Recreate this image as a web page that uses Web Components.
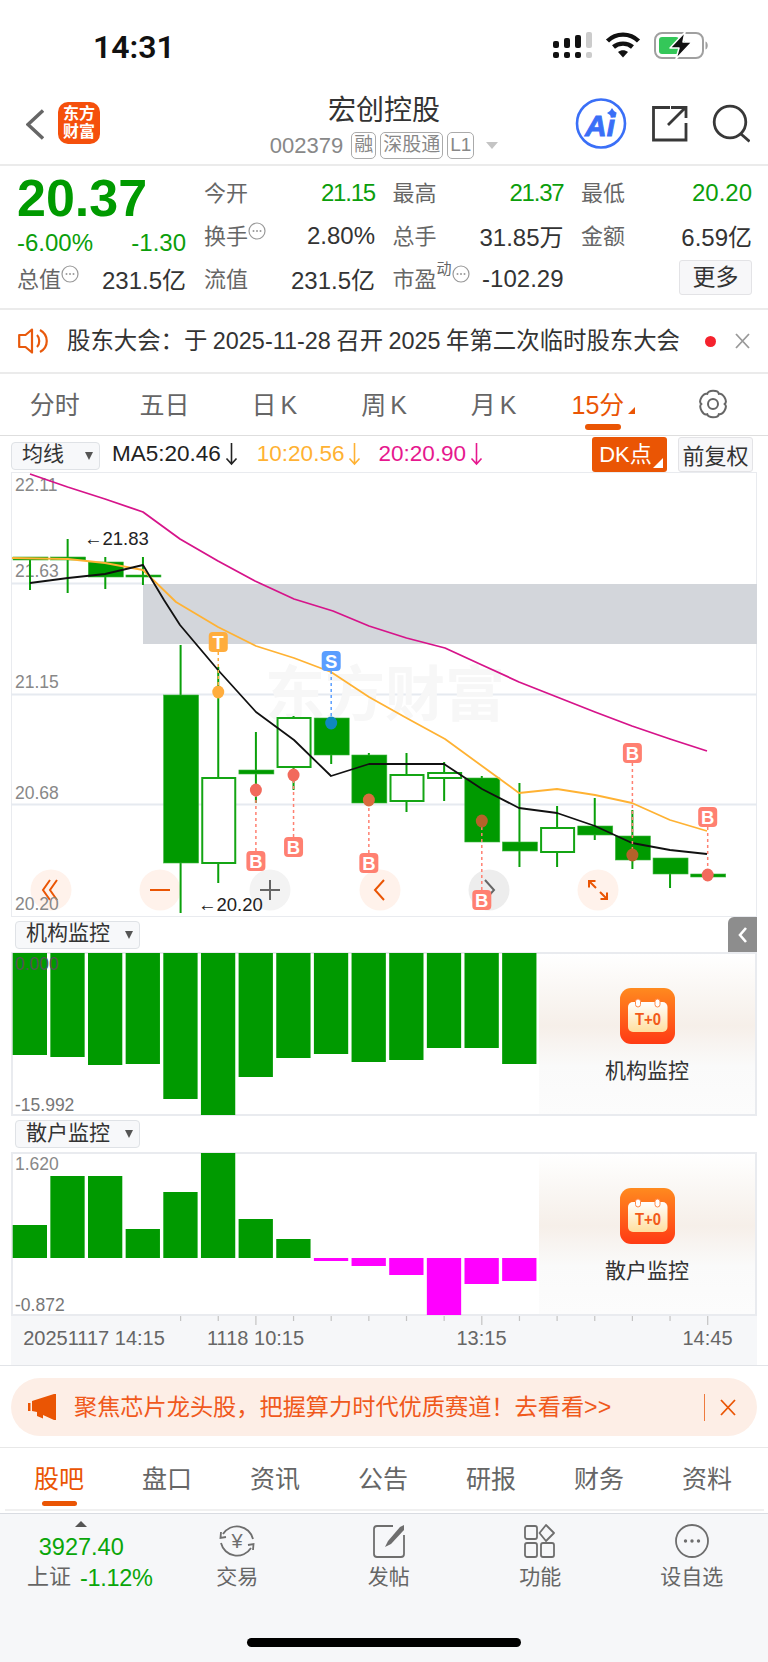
<!DOCTYPE html>
<html lang="zh">
<head>
<meta charset="utf-8">
<title>宏创控股</title>
<style>
html, body { margin: 0; padding: 0; background: #fff; }
body { width: 768px; height: 1662px; overflow: hidden; font-family: "Liberation Sans", "Noto Sans CJK SC", sans-serif; color: #333; }
</style>
</head>
<body>
<status-bar></status-bar>
<stock-nav></stock-nav>
<quote-panel></quote-panel>
<notice-bar></notice-bar>
<period-tabs></period-tabs>
<ma-bar></ma-bar>
<kline-chart></kline-chart>
<monitor-panel name="机构监控" head="35" max="0.000" min="-15.992"
  bars="1055,1057,1065,1064,1099,1115,1077,1058,1054,1062,1060,1048,1048,1064" base="953"></monitor-panel>
<monitor-panel name="散户监控" head="36" max="1.620" min="-0.872"
  bars="1225,1176,1176,1229,1192,1153,1219,1239,1261,1266,1275,1315,1284,1281" base="1258"></monitor-panel>
<time-axis></time-axis>
<promo-banner></promo-banner>
<info-tabs></info-tabs>
<bottom-bar></bottom-bar>

<script>
const GREEN = "#009a00"
const ORANGE = "#ea5504"
const slotX = i => 30 + 37.65 * i

class Shadowed extends HTMLElement {
    constructor() {
        super()
        this.attachShadow({ mode: "open" })
    }
    connectedCallback() {
        this.shadowRoot.innerHTML = `<style>${this.getStyles()}</style>${this.getMarkup()}`
    }
    getStyles() { return "" }
    getMarkup() { return "" }
}

class StatusBar extends Shadowed {
    getStyles() {
        return `
        :host { display: flex; height: 82px; box-sizing: border-box; padding: 27px 0 0 93px; }
        .time { font: 600 32px/34px Roboto, sans-serif; color: #111; width: 460px; padding-top: 3px; }
        svg { display: block; }
        `
    }
    getMarkup() {
        return `
        <div class="time">14:31</div>
        <svg width="162" height="34" viewBox="553 27 162 34">
          <g fill="#111">
            <rect x="553" y="41" width="6" height="7" rx="2"/><rect x="564" y="38" width="6" height="10" rx="2"/><rect x="575" y="35" width="6" height="13" rx="2"/>
            <rect x="553" y="52" width="6" height="6" rx="2"/><rect x="564" y="52" width="6" height="6" rx="2"/><rect x="575" y="52" width="6" height="6" rx="2"/>
          </g>
          <g fill="#ccc"><rect x="586" y="32" width="6" height="16" rx="2"/><rect x="586" y="52" width="6" height="6" rx="2"/></g>
          <g fill="none" stroke="#111" stroke-width="4.4">
            <path d="M607.5 41 C616 32.5 630 32.5 638.5 41"/>
            <path d="M613.5 47 C618.5 42.5 627.5 42.5 632.5 47"/>
          </g>
          <path d="M618 52 C621 49.5 625 49.5 628 52 L623 57.500 Z" fill="#111"/>
          <rect x="655" y="33" width="48" height="25" rx="7" fill="#fff" stroke="#a0a0a0" stroke-width="2"/>
          <path d="M705.500 41.500 C708.500 42.500 708.500 48.500 705.500 49.500 Z" fill="#a0a0a0"/>
          <rect x="659" y="37" width="20" height="17" rx="3" fill="#34c759"/>
          <rect x="683" y="41" width="2" height="9" fill="#34c759"/>
          <path d="M685 32 L670 48 H679 L676 59 L692 42 H683 Z" fill="#111" stroke="#fff" stroke-width="1.500" stroke-linejoin="round"/>
        </svg>
        `
    }
}

class StockNav extends Shadowed {
    getStyles() {
        return `
        :host { display: block; position: relative; height: 84px; box-sizing: border-box; border-bottom: 2px solid #ebebeb; }
        .row { display: flex; height: 82px; }
        .back { margin: 27px 14px 0 26px; }
        .logo { width: 42px; height: 42px; margin-top: 20px; border-radius: 10px; background: #f5500c; color: #fff; font-weight: 700; font-size: 16px; line-height: 18px; text-align: center; display: flex; flex-direction: column; justify-content: center; }
        .mid { flex: 1; display: flex; flex-direction: column; align-items: center; padding-left: 94px; }
        h1 { margin: 13px 0 0; font-size: 28px; line-height: 32px; font-weight: 400; color: #333; }
        .sub { display: flex; align-items: center; margin-top: 5px; height: 27px; color: #888; font-size: 22px; }
        .code { margin-right: 8px; }
        .tag { box-sizing: border-box; height: 27px; line-height: 24px; padding: 0 2px; margin-right: 4px; border: 1px solid #aaa; border-radius: 5px; font-size: 19px; }
        .tri { width: 0; height: 0; margin-left: 8px; border: 6px solid transparent; border-top: 7px solid #c4c4c4; border-bottom: 0; }
        .tools { display: block; margin-right: 18px; }
        `
    }
    getMarkup() {
        return `
        <div class="row">
          <svg class="back" width="18" height="32" viewBox="26 109 18 32"><path d="M43 110.500 L28 124.500 L43 138.500" fill="none" stroke="#666" stroke-width="3.400"/></svg>
          <div class="logo"><span>东方</span><span>财富</span></div>
          <div class="mid">
            <h1>宏创控股</h1>
            <div class="sub"><span class="code">002379</span><span class="tag">融</span><span class="tag">深股通</span><span class="tag">L1</span><span class="tri"></span></div>
          </div>
          <svg class="tools" width="176" height="82" viewBox="574 82 176 82">
            <circle cx="601" cy="123.500" r="24" fill="#fff" stroke="#3a6ff7" stroke-width="2.600"/>
            <text x="600" y="136" text-anchor="middle" font-family="Liberation Sans" font-weight="700" font-style="italic" font-size="30" fill="#3a6ff7" stroke="#3a6ff7" stroke-width=".9">Ai</text>
            <path d="M612 108 l2 3 3 2 -3 2 -2 3 -2 -3 -3 -2 3 -2 Z" fill="#3a6ff7"/>
            <g fill="none" stroke="#383838" stroke-width="2.800">
              <path d="M670 107.500 H653.500 V140 H686 V123"/>
              <path d="M668 125 L685 108 M671 107.500 H686 V118"/>
              <circle cx="730" cy="122" r="15.800"/>
              <path d="M741 134 L749.500 141.500"/>
            </g>
          </svg>
        </div>
        `
    }
}

class QuoteCell extends Shadowed {
    getStyles() {
        return `
        :host { display: flex; align-items: center; justify-content: space-between; height: 43px; font-size: 24px; color: #333; white-space: nowrap; }
        .label { display: flex; color: #666; font-size: 22px; margin-top: -4px; }
        .value { color: #333; }
        :host([green]) .value { color: #0b9e0b; }
        :host([tight]) .value { letter-spacing: -1.200px; }
        sup { font-size: 15px; line-height: 15px; margin: 0; display: block; height: 15px; }
        svg { display: block; margin: 3px 0 0 0; }
        `
    }
    getMarkup() {
        const info = this.hasAttribute("info") ? `<svg width="18" height="20" viewBox="0 0 18 20"><circle cx="9" cy="10" r="8" fill="none" stroke="#999" stroke-width="1.200"/><g fill="#999"><circle cx="5.500" cy="10" r="1"/><circle cx="9" cy="10" r="1"/><circle cx="12.500" cy="10" r="1"/></g></svg>` : ""
        const sup = this.hasAttribute("sup") ? `<sup>${this.getAttribute("sup")}</sup>` : ""
        return `<span class="label">${this.getAttribute("label")}${sup}${info}</span><span class="value">${this.getAttribute("value")}</span>`
    }
}

class QuotePanel extends Shadowed {
    getStyles() {
        return `
        :host { display: flex; height: 144px; box-sizing: border-box; border-bottom: 2px solid #ebebeb; padding: 6px 16px 0 17px; }
        .left { width: 170px; margin-right: 18px; }
        .price { font-size: 52px; line-height: 52px; font-weight: 700; color: ${GREEN}; height: 50px; }
        .chg { display: flex; justify-content: space-between; margin-top: 6px; height: 29px; line-height: 29px; font-size: 24px; color: #0b9e0b; }
        .grid { flex: 1; display: grid; grid-template-columns: repeat(3, 171px); column-gap: 17.500px; grid-auto-rows: 43px; margin-top: -1px; }
        .more { box-sizing: border-box; justify-self: end; width: 73px; height: 35px; margin-top: 3px; border: 1px solid #e3e3e6; border-radius: 3px; background: #f7f7f9; font-size: 23px; line-height: 32px; text-align: center; color: #333; }
        `
    }
    getMarkup() {
        return `
        <div class="left">
          <div class="price">20.37</div>
          <div class="chg"><span>-6.00%</span><span>-1.30</span></div>
          <quote-cell label="总值" info value="231.5亿"></quote-cell>
        </div>
        <div class="grid">
          <quote-cell label="今开" value="21.15" green tight></quote-cell>
          <quote-cell label="最高" value="21.37" green tight></quote-cell>
          <quote-cell label="最低" value="20.20" green></quote-cell>
          <quote-cell label="换手" info value="2.80%"></quote-cell>
          <quote-cell label="总手" value="31.85万"></quote-cell>
          <quote-cell label="金额" value="6.59亿"></quote-cell>
          <quote-cell label="流值" value="231.5亿"></quote-cell>
          <quote-cell label="市盈" sup="动" info value="-102.29"></quote-cell>
          <div class="more">更多</div>
        </div>
        `
    }
}

class NoticeBar extends Shadowed {
    getStyles() {
        return `
        :host { display: flex; align-items: center; height: 64px; box-sizing: border-box; border-bottom: 2px solid #ebebeb; padding: 0 18px; }
        svg { display: block; flex: none; }
        .text { flex: 1; margin: -5px 0 0 19px; font-size: 23.400px; word-spacing: -1px; color: #333; white-space: nowrap; }
        .dot { width: 11px; height: 11px; border-radius: 50%; background: #f5222d; margin-right: 19px; }
        `
    }
    getMarkup() {
        return `
        <svg width="30" height="26" viewBox="18 327 30 26" fill="none" stroke="#e8590c" stroke-width="2.200">
          <path d="M32 328.500 L25.500 334 H19.200 V346 H25.500 L32 351.500 Z" stroke-linejoin="round"/>
          <path d="M37 334 C40 337 40 343 37 346"/>
          <path d="M40 329 C49 334 49 346 40 351"/>
        </svg>
        <div class="text">股东大会：于 2025-11-28 召开 2025 年第二次临时股东大会</div>
        <span class="dot"></span>
        <svg width="15" height="16" viewBox="0 0 15 16"><path d="M1 1 L14 15 M14 1 L1 15" stroke="#999" stroke-width="1.800"/></svg>
        `
    }
}

class PeriodTabs extends Shadowed {
    getStyles() {
        return `
        :host { display: grid; grid-template-columns: repeat(7, 1fr); height: 62px; box-sizing: border-box; border-bottom: 1px solid #dedede; }
        div { position: relative; display: flex; align-items: center; justify-content: center; padding-bottom: 4px; font-size: 25px; color: #666; white-space: nowrap; }
        .k { margin-left: 4px; }
        .on { color: ${ORANGE}; }
        .on::after { content: ""; position: absolute; left: 36px; bottom: 5px; width: 36px; height: 6px; border-radius: 3px; background: ${ORANGE}; }
        .on b { display: block; width: 0; height: 0; margin: 16px 0 0 4px; border-left: 7px solid transparent; border-bottom: 7px solid ${ORANGE}; }
        svg { margin-top: 3px; }
        `
    }
    gearPath() {
        // six rounded lobes, one pointing straight up
        const pt = (r, deg) => {
            const a = deg * Math.PI / 180
            return `${(15 + r * Math.cos(a)).toFixed(1)} ${(15 + r * Math.sin(a)).toFixed(1)}`
        }
        let d = `M${pt(11.5, -120)}`
        for (let k = 0; k < 6; k++) {
            const mid = -90 + 60 * k
            d += ` C${pt(15.5, mid - 22)} ${pt(15.5, mid + 22)} ${pt(11.5, mid + 30)}`
        }
        return d + " Z"
    }
    getMarkup() {
        return `
        <div>分时</div><div>五日</div><div><span>日<span class="k">K</span></span></div><div><span>周<span class="k">K</span></span></div><div><span>月<span class="k">K</span></span></div>
        <div class="on">15分<b></b></div>
        <div><svg width="30" height="30" viewBox="0 0 30 30" fill="none" stroke="#666" stroke-width="2"><path d="${this.gearPath()}" stroke-linejoin="round"/><circle cx="15" cy="15" r="5"/></svg></div>
        `
    }
}

class ChartSelect extends Shadowed {
    getStyles() {
        return `
        :host { display: inline-flex; box-sizing: border-box; align-items: center; justify-content: space-between; height: 28px; padding: 0 6px 0 10px; background: #f7f8fa; border: 1px solid #dfe2e6; border-radius: 4px; font-size: 21px; line-height: 22px; color: #333; white-space: nowrap; }
        span { display: block; margin-top: -3px; }
        i { width: 0; height: 0; border: 4.500px solid transparent; border-top: 8px solid #555; border-bottom: 0; }
        `
    }
    getMarkup() {
        return `<span><slot></slot></span><i></i>`
    }
}

class MaBar extends Shadowed {
    getStyles() {
        return `
        :host { display: flex; align-items: center; height: 36px; box-sizing: border-box; padding: 0 15px 0 11px; font-size: 22.500px; white-space: nowrap; }
        chart-select { width: 89px; margin-top: 3px; margin-right: 12px; }
        span { display: flex; align-items: center; }
        svg { margin-left: 4px; }
        .a { color: #222; margin-right: 19px; }
        .b { color: #ffb233; margin-right: 17px; }
        .c { color: #e6188e; margin-right: auto; }
        .dk { position: relative; box-sizing: border-box; width: 75px; height: 35px; border-radius: 3px; background: ${ORANGE}; color: #fff; line-height: 35px; text-align: center; justify-content: center; font-size: 22px; padding-right: 8px; }
        .dk::after { content: ""; position: absolute; right: 4px; bottom: 4px; border-left: 10px solid transparent; border-bottom: 10px solid #fff; }
        .fq { box-sizing: border-box; width: 75px; height: 35px; margin-left: 11px; border: 1px solid #e3e3e6; border-radius: 3px; background: #f7f7f9; color: #333; justify-content: center; font-size: 22px; }
        `
    }
    arrow(color) {
        return `<svg width="13" height="24" viewBox="0 0 13 24" fill="none" stroke="${color}" stroke-width="1.600"><path d="M6.500 1 V22 M1.500 16.500 L6.500 22 L11.500 16.500"/></svg>`
    }
    getMarkup() {
        return `
        <chart-select>均线</chart-select>
        <span class="a">MA5:20.46${this.arrow("#222")}</span>
        <span class="b">10:20.56${this.arrow("#ffb233")}</span>
        <span class="c">20:20.90${this.arrow("#e6188e")}</span>
        <span class="dk">DK点</span>
        <span class="fq">前复权</span>
        `
    }
}

class KlineChart extends Shadowed {
    getStyles() {
        return `
        :host { display: block; height: 445px; }
        svg { display: block; font-family: "Liberation Sans", "Noto Sans CJK SC", sans-serif; }
        `
    }
    candles() {
        // top, bottom, wick top, wick bottom, filled
        const data = [
            [557, 560, 557, 590, 1], [557, 560, 539, 593, 1], [562, 577, 557, 589, 1], [575, 577, 557, 585, 1],
            [695, 863, 645, 913, 1], [778, 863, 667, 883, 0], [770, 774, 732, 803, 1], [718, 767, 716, 790, 0],
            [718, 755, 718, 764, 1], [755, 803, 753, 803, 1], [775, 801, 753, 812, 0], [773, 778, 762, 801, 0],
            [778, 842, 776, 842, 1], [842, 851, 783, 867, 1], [828, 852, 806, 867, 0], [826, 835, 798, 840, 1],
            [836, 860, 810, 869, 1], [858, 874, 858, 888, 1], [874, 877, 874, 877, 1]
        ]
        return data.map((d, i) => {
            const x = slotX(i)
            const body = d[4]
                ? `<rect x="${x - 17}" y="${d[0]}" width="35" height="${d[1] - d[0]}" fill="${GREEN}" stroke="#3cb43c" stroke-width=".6"/>`
                : `<rect x="${x - 16}" y="${d[0]}" width="33" height="${d[1] - d[0]}" fill="#fff" stroke="#14a514" stroke-width="2"/>`
            return `<path d="M${x} ${d[2]} V${d[0]} M${x} ${d[1]} V${d[3]}" stroke="#0aa00a" stroke-width="2"/>${body}`
        }).join("")
    }
    lines() {
        const pink = "30,474 67.600,487 105,499 143,512 180,539 218,561 255,581 294,599 333,611 369,626 406.500,638 445,648 482,665 519,682 557,697 595,712 632,726 670,739 707,751"
        const yellow = "12,558 68,559 105,563 143,570 176,602 218,627 256,646 294,658 331,672 369,697 406.500,718 445,739 482,766 519,793 557,789 595,795 632,803 670,820 707,831"
        const black = "30,583 68,578 105,574 143,565 164,600 180,625 218,670 256,712 294,740 331,776 369,764 406,764 444,764 482,789 519,808 557,813 595,826 632,843 670,850 707,854"
        return `<g fill="none" stroke-width="1.800" stroke-linejoin="round">
          <polyline points="${pink}" stroke="#d6148a"/>
          <polyline points="${yellow}" stroke="#ffb233"/>
          <polyline points="${black}" stroke="#111"/>
        </g>`
    }
    marker(letter, i, boxTop, dotY, fill, dotFill) {
        const x = slotX(i)
        const boxBottom = boxTop + 20
        const from = boxTop > dotY ? boxTop : boxBottom
        return `<path d="M${x} ${from} L${x} ${dotY}" stroke="${fill}" stroke-width="1.500" stroke-dasharray="3 3"/>
          <ellipse cx="${x}" cy="${dotY}" rx="6" ry="6.500" fill="${dotFill}"/>
          <rect x="${x - 9.500}" y="${boxTop}" width="19" height="20" rx="4" fill="${fill}"/>
          <text x="${x}" y="${boxTop + 16.500}" text-anchor="middle" font-size="18.500" font-weight="700" fill="#fff">${letter}</text>`
    }
    zoomButtons() {
        const icons = [
            [51, "#fff2eb", `<path d="M-1 -10 L-8 0 L-1 10 M6 -10 L-1 0 L6 10" stroke="${ORANGE}"/>`],
            [160, "#fff2eb", `<path d="M-10 0 H10" stroke="${ORANGE}"/>`],
            [270, "#f3f3f3", `<path d="M-10 0 H10 M0 -10 V10" stroke="#666"/>`],
            [380, "#fff2eb", `<path d="M4 -10 L-5 0 L4 10" stroke="${ORANGE}"/>`],
            [489, "#ededed", `<path d="M-4 -10 L5 0 L-4 10" stroke="#666"/>`],
            [598, "#fff2eb", `<path d="M-9 -9 L-2 -2 M-9 -2.500 V-9 H-2.500 M9 9 L2 2 M9 2.500 V9 H2.500" stroke="${ORANGE}"/>`]
        ]
        return icons.map(b => `<g transform="translate(${b[0]} 890)" fill="none" stroke-width="2"><circle r="20.500" fill="${b[1]}"/>${b[2]}</g>`).join("")
    }
    getMarkup() {
        const grey = "#888"
        const labels = [["22.11", 491], ["21.63", 577], ["21.15", 688], ["20.68", 799], ["20.20", 910]]
        const B = "#ff8071"
        const brown = "#b5622a"
        return `
        <svg width="768" height="445" viewBox="0 472 768 445">
          <rect x="11.500" y="472.500" width="745" height="444" fill="#fff" stroke="#e9ebef"/>
          <rect x="143" y="584" width="614" height="60" fill="#d3d6db"/>
          <path d="M11 583.500 H143 M11 694.500 H757 M11 804.500 H757" stroke="#e6eaf0" stroke-width="2"/>
          <text x="385" y="716" text-anchor="middle" font-size="60" font-weight="700" fill="#f7f7f7">东方财富</text>
          ${this.zoomButtons()}
          ${labels.map(l => `<text x="15" y="${l[1]}" font-size="17.500" fill="${grey}">${l[0]}</text>`).join("")}
          ${this.candles()}
          ${this.lines()}
          ${this.marker("T", 5, 632, 692, "#ffad3d", "#ffad3d")}
          ${this.marker("S", 8, 651, 723, "#5a9eff", "#0f88c0")}
          ${this.marker("B", 6, 851, 790, B, "#f26a5c")}
          ${this.marker("B", 7, 837, 775, B, "#f26a5c")}
          ${this.marker("B", 9, 853, 800, B, "#d96b3e")}
          ${this.marker("B", 12, 890, 821, B, brown)}
          ${this.marker("B", 16, 743, 855, B, brown)}
          ${this.marker("B", 18, 807, 875, B, "#f26a5c")}
          <text x="84" y="545" font-size="18.500" fill="#222">←21.83</text>
          <text x="198" y="911" font-size="18.500" fill="#222">←20.20</text>
        </svg>
        `
    }
}

class MonitorPanel extends Shadowed {
    getStyles() {
        return `
        :host { display: block; }
        .head { position: relative; display: flex; align-items: center; padding-left: 15px; height: var(--head); }
        chart-select { width: 125px; }
        .pull { position: absolute; right: 11px; top: 0; width: 29px; height: 35px; background: #8d8d8d; border-radius: 6px 0 0 0; display: flex; align-items: center; justify-content: center; }
        .body { display: flex; height: 164px; margin: 0 11px; box-sizing: border-box; }
        svg.bars { display: block; flex: none; font-family: "Liberation Sans", sans-serif; }
        .promo { flex: 1; display: flex; flex-direction: column; align-items: center; padding-top: 34px; font-size: 21px; color: #333;
          background: linear-gradient(180deg, #fff 0%, #faf7f4 22%, #f6efe9 45%, #fafafa 70%, #fcfcfc 100%);
          border: solid #e9ebef; border-width: 2px 2px 2px 0; box-sizing: border-box; }
        .name { margin-top: 10px; }
        `
    }
    getMarkup() {
        const uid = this.getAttribute("name")
        const base = Number(this.getAttribute("base"))
        const bars = this.getAttribute("bars").split(",").map(Number)
        const top = Number(this.getAttribute("head")) === 35 ? 952 : 1152
        const rects = bars.map((b, i) => {
            const y = Math.min(b, base)
            const h = Math.abs(b - base)
            const fill = b > base && top === 1152 ? "#ff00ff" : GREEN
            return `<rect x="${12.700 + 37.650 * i}" y="${y}" width="34.300" height="${h}" fill="${fill}"/>`
        }).join("")
        const pull = top === 952 ? `<div class="pull"><svg width="12" height="18" viewBox="0 0 12 18"><path d="M9 2 L3 9 L9 16" fill="none" stroke="#fff" stroke-width="2.600"/></svg></div>` : ""
        const dark = top === 952 ? "#555" : "#888"
        this.style.setProperty("--head", this.getAttribute("head") + "px")
        return `
        <div class="head"><chart-select>${uid}</chart-select>${pull}</div>
        <div class="body">
          <svg class="bars" width="528" height="164" viewBox="11 ${top} 528 164">
            <path d="M12 ${top + 1} H539 M12 ${top + 163} H539 M12 ${top} V${top + 164}" stroke="#e9ebef" stroke-width="2" fill="none"/>
            ${rects}
            <text x="15" y="${top + 18}" font-size="17.500" fill="${dark}">${this.getAttribute("max")}</text>
            <text x="15" y="${top + 159}" font-size="17.500" fill="#777">${this.getAttribute("min")}</text>
          </svg>
          <div class="promo">
            <svg width="55" height="56" viewBox="0 0 55 56">
              <defs>
                <linearGradient id="g" x1="0" y1="0" x2="0" y2="1"><stop offset="0" stop-color="#ff8a1f"/><stop offset="1" stop-color="#ff3a14"/></linearGradient>
                <linearGradient id="c" x1="0" y1="0" x2="0" y2="1"><stop offset="0" stop-color="#fff"/><stop offset="1" stop-color="#ffdf9f"/></linearGradient>
              </defs>
              <rect width="55" height="56" rx="11" fill="url(#g)"/>
              <rect x="8" y="14" width="39.500" height="30" rx="5" fill="url(#c)"/>
              <rect x="15.500" y="11" width="5" height="8" rx="2.500" fill="#fff" stroke="#ff8a4a" stroke-width="1"/>
              <rect x="35" y="11" width="5" height="8" rx="2.500" fill="#fff" stroke="#ff8a4a" stroke-width="1"/>
              <text x="28" y="37" text-anchor="middle" font-family="Liberation Sans" font-weight="700" font-size="17" textLength="26" lengthAdjust="spacingAndGlyphs" fill="#f25a1a">T+0</text>
            </svg>
            <div class="name">${uid}</div>
          </div>
        </div>
        `
    }
}

class TimeAxis extends Shadowed {
    getStyles() {
        return `
        :host { display: block; height: 50px; box-sizing: border-box; border-bottom: 1px solid #e2e4e8; }
        svg { display: block; font-family: "Liberation Sans", sans-serif; }
        `
    }
    getMarkup() {
        const ticks = []
        for (let i = 4; i < 19; i++) {
            const long = i === 6 || i === 12 || i === 18
            ticks.push(`M${slotX(i)} 0 V${long ? 9 : 5}`)
        }
        return `
        <svg width="768" height="49" viewBox="0 0 768 49">
          <rect x="11" y="0" width="746" height="49" fill="#f6f7f9"/>
          <path d="${ticks.join(" ")}" stroke="#c4c4c4" stroke-width="1.200"/>
          <g font-size="20" fill="#666" text-anchor="middle">
            <text x="94" y="29">20251117 14:15</text>
            <text x="255.500" y="29">1118 10:15</text>
            <text x="481.500" y="29">13:15</text>
            <text x="707.500" y="29">14:45</text>
          </g>
        </svg>
        `
    }
}

class PromoBanner extends Shadowed {
    getStyles() {
        return `
        :host { display: block; height: 82px; box-sizing: border-box; padding: 12px 11px 0; border-bottom: 1px solid #e8e8e8; }
        .pill { display: flex; align-items: center; height: 58px; padding: 0 21px 0 17px; border-radius: 29px; background: #fdeee6; color: #f0591c; font-size: 23.200px; white-space: nowrap; }
        .text { flex: 1; margin: -4px 0 0 18px; }
        .sep { width: 1.500px; height: 27px; background: #ee7a3e; margin-right: 15px; }
        svg { display: block; flex: none; }
        `
    }
    getMarkup() {
        return `
        <div class="pill">
          <svg width="28" height="26" viewBox="0 0 28 26" fill="${ORANGE}"><rect x="0" y="9" width="2.500" height="8"/><path d="M4 7 L26 0 H28 V26 H26 L15 21 L15 24.500 L9 22 V18 L4 17 Z"/></svg>
          <span class="text">聚焦芯片龙头股，把握算力时代优质赛道！去看看&gt;&gt;</span>
          <span class="sep"></span>
          <svg width="16" height="17" viewBox="0 0 16 17"><path d="M1 1 L15 16 M15 1 L1 16" stroke="${ORANGE}" stroke-width="1.800"/></svg>
        </div>
        `
    }
}

class InfoTabs extends Shadowed {
    getStyles() {
        return `
        :host { display: grid; grid-template-columns: repeat(7, 108px); height: 66px; box-sizing: border-box; padding: 0 7px 0 5px; border-bottom: 1.500px solid #d9dce2; position: relative; }
        :host::after { content: ""; position: absolute; left: 5px; right: 4px; bottom: 2.500px; height: 2px; background: #f0f0f0; }
        div { position: relative; height: 62px; line-height: 62px; text-align: center; font-size: 25px; color: #666; }
        .on { color: ${ORANGE}; }
        .on::after { content: ""; position: absolute; left: 37px; bottom: 4px; width: 35px; height: 5px; border-radius: 3px; background: ${ORANGE}; }
        `
    }
    getMarkup() {
        const names = ["股吧", "盘口", "资讯", "公告", "研报", "财务", "资料"]
        return names.map((n, i) => `<div class="${i === 0 ? "on" : ""}">${n}</div>`).join("")
    }
}

class BarItem extends Shadowed {
    getStyles() {
        return `
        :host { display: flex; flex-direction: column; align-items: center; width: 151.500px; padding-top: 9px; font-size: 21px; color: #666; }
        ::slotted(svg) { display: block; height: 36px; }
        span { margin-top: 5px; line-height: 26px; }
        `
    }
    getMarkup() {
        return `<slot></slot><span>${this.getAttribute("label")}</span>`
    }
}

class BottomBar extends Shadowed {
    getStyles() {
        return `
        :host { display: block; position: relative; height: 148px; box-sizing: border-box; background: #f6f7f9; padding-left: 10px; }
        .row { display: flex; }
        .index { display: flex; flex-direction: column; align-items: center; width: 151.500px; color: #0aa60a; font-size: 23.500px; box-sizing: border-box; padding-right: 9px; }
        .index i { width: 0; height: 0; margin-top: 7px; border: 6px solid transparent; border-bottom: 6.500px solid #555; border-top: 0; }
        .px { margin-top: 7px; line-height: 26px; }
        .pct { margin: 4px 0 0 17px; line-height: 28px; white-space: nowrap; letter-spacing: -.3px; display: flex; align-items: center; }
        .pct b { font-weight: 400; color: #666; margin: -2px 9px 0 0; font-size: 22px; letter-spacing: 0; }
        .home { position: absolute; left: 247px; top: 124px; width: 274px; height: 9px; border-radius: 5px; background: #000; }
        svg text { font-family: "Liberation Sans", "Noto Sans CJK SC", sans-serif; }
        `
    }
    getMarkup() {
        return `
        <div class="row">
          <div class="index"><i></i><div class="px">3927.40</div><div class="pct"><b>上证</b>-1.12%</div></div>
          <bar-item label="交易">
            <svg width="40" height="36" viewBox="0 0 40 36" fill="none" stroke="#6e6e6e" stroke-width="1.800">
              <path d="M6 11 A16.500 16.500 0 0 1 36 16 M34 25 A16.500 16.500 0 0 1 4 20"/>
              <path d="M4 9 L3.500 15 L9 14 M36 27 L36.500 21 L31 22"/>
              <text x="20" y="25" text-anchor="middle" font-size="20" fill="#6e6e6e" stroke="none">¥</text>
            </svg>
          </bar-item>
          <bar-item label="发帖">
            <svg width="36" height="36" viewBox="0 0 36 36" fill="none" stroke="#6e6e6e" stroke-width="1.800">
              <path d="M22 3 H6 Q3 3 3 6 V31 Q3 34 6 34 H30 Q33 34 33 31 V12"/>
              <path d="M14 24 L17 18 L29 4 L33 2 L33 7 L20 21 Z" fill="#6e6e6e" stroke="none"/>
            </svg>
          </bar-item>
          <bar-item label="功能">
            <svg width="36" height="36" viewBox="0 0 36 36" fill="none" stroke="#6e6e6e" stroke-width="1.800" stroke-linejoin="round">
              <rect x="3" y="3" width="12" height="13" rx="2"/>
              <path d="M24 2 L32 10 L24 18 L17.500 10 Z"/>
              <rect x="3" y="20" width="12" height="14" rx="2"/>
              <rect x="19" y="20" width="13" height="14" rx="2"/>
            </svg>
          </bar-item>
          <bar-item label="设自选">
            <svg width="36" height="36" viewBox="0 0 36 36" fill="none" stroke="#6e6e6e" stroke-width="1.800">
              <circle cx="18" cy="18" r="16"/>
              <g fill="#6e6e6e" stroke="none"><circle cx="11.500" cy="18" r="1.700"/><circle cx="18" cy="18" r="1.700"/><circle cx="24.500" cy="18" r="1.700"/></g>
            </svg>
          </bar-item>
        </div>
        <div class="home"></div>
        `
    }
}

customElements.define("status-bar", StatusBar)
customElements.define("stock-nav", StockNav)
customElements.define("quote-cell", QuoteCell)
customElements.define("quote-panel", QuotePanel)
customElements.define("notice-bar", NoticeBar)
customElements.define("period-tabs", PeriodTabs)
customElements.define("chart-select", ChartSelect)
customElements.define("ma-bar", MaBar)
customElements.define("kline-chart", KlineChart)
customElements.define("monitor-panel", MonitorPanel)
customElements.define("time-axis", TimeAxis)
customElements.define("promo-banner", PromoBanner)
customElements.define("info-tabs", InfoTabs)
customElements.define("bar-item", BarItem)
customElements.define("bottom-bar", BottomBar)
</script>
</body>
</html>
